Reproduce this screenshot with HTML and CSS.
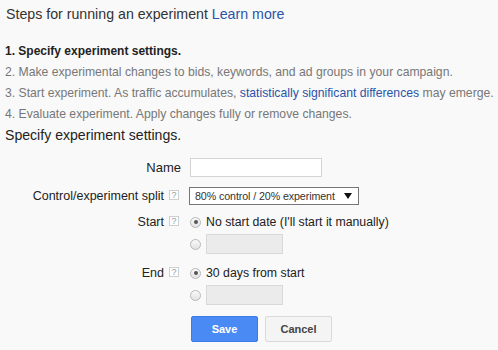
FILE: index.html
```html
<!DOCTYPE html>
<html>
<head>
<meta charset="utf-8">
<link rel="stylesheet" href="styles.css">
</head>
<body>
<div class="page">
  <div class="title">Steps for running an experiment <a class="link" href="#">Learn more</a></div>
  <ol class="steps">
    <li class="step current">1. Specify experiment settings.</li>
    <li class="step">2. Make experimental changes to bids, keywords, and ad groups in your campaign.</li>
    <li class="step">3. Start experiment. As traffic accumulates, <a class="link" href="#">statistically significant differences</a> may emerge.</li>
    <li class="step">4. Evaluate experiment. Apply changes fully or remove changes.</li>
  </ol>
  <div class="heading">Specify experiment settings.</div>

  <div class="form">
    <div class="row row-name">
      <div class="label">Name</div>
      <div class="control"><input class="text-input" type="text"></div>
    </div>
    <div class="row row-split">
      <div class="label">Control/experiment split<span class="help">?</span></div>
      <div class="control">
        <div class="select">
          <span class="select-text">80% control / 20% experiment</span>
          <span class="select-arrow"></span>
        </div>
      </div>
    </div>
    <div class="row row-start">
      <div class="label">Start<span class="help">?</span></div>
      <div class="control">
        <div class="option"><span class="radio checked"></span><span class="option-text">No start date (I'll start it manually)</span></div>
        <div class="option option-date"><span class="radio"></span><span class="date-input"></span></div>
      </div>
    </div>
    <div class="row row-end">
      <div class="label">End<span class="help">?</span></div>
      <div class="control">
        <div class="option"><span class="radio checked"></span><span class="option-text">30 days from start</span></div>
        <div class="option option-date"><span class="radio"></span><span class="date-input"></span></div>
      </div>
    </div>
    <div class="row row-buttons">
      <div class="label"></div>
      <div class="control buttons">
        <button class="btn btn-save">Save</button>
        <button class="btn btn-cancel">Cancel</button>
      </div>
    </div>
  </div>
</div>
</body>
</html>
```

FILE: styles.css
```css
html, body {
  margin: 0;
  padding: 0;
  background: #f9f9f9;
}
body {
  font-family: "Liberation Sans", Arial, sans-serif;
  color: #222;
}
.page {
  padding: 4px 5px 0 5px;
}
.title {
  font-size: 14.2px;
  line-height: 20px;
  color: #333;
  padding-left: 1px;
}
.link {
  color: #2a54a8;
  text-decoration: none;
}
.steps {
  list-style: none;
  margin: 17px 0 0 0;
  padding: 0;
}
.step {
  font-size: 12.2px;
  line-height: 21px;
  color: #777;
  white-space: nowrap;
}
.step.current {
  font-size: 12px;
  color: #222;
  font-weight: bold;
}
.heading {
  font-size: 14.1px;
  line-height: 21px;
  color: #222;
}
.form {
  display: flex;
  flex-direction: column;
  margin-top: 12px;
}
.row {
  display: flex;
  align-items: flex-start;
}
.label {
  width: 176px;
  flex: none;
  display: flex;
  justify-content: flex-end;
  align-items: flex-start;
  font-size: 12.5px;
  color: #222;
}
.row-name .label { font-size: 13px; }
.control {
  margin-left: 9px;
  display: flex;
  flex-direction: column;
}
.row-name .label { line-height: 19px; }
.row-split { margin-top: 10px; }
.row-split .label { line-height: 18px; }
.row-start { margin-top: 8px; }
.row-start .label, .row-end .label { line-height: 18px; }
.row-end { margin-top: 10px; }
.row-buttons { margin-top: 11px; }

.help {
  width: 8px;
  height: 8px;
  border: 1px solid #cfcfcf;
  background: #fff;
  color: #999;
  font-size: 9px;
  line-height: 8px;
  text-align: center;
  margin: 3px 2px 0 5px;
  font-family: "Liberation Sans", Arial, sans-serif;
}
.text-input {
  box-sizing: border-box;
  width: 132px;
  height: 19px;
  margin: 0;
  padding: 0 3px;
  border: 1px solid #d4d4d4;
  background: #fff;
  outline: none;
}
.select {
  box-sizing: border-box;
  position: relative;
  width: 170px;
  height: 18px;
  margin-left: -1px;
  border: 1px solid #767676;
  background: #fff;
  display: flex;
  align-items: center;
}
.select-text {
  font-size: 10.7px;
  padding-left: 5px;
  color: #333;
  letter-spacing: -0.1px;
}
.select-arrow {
  position: absolute;
  right: 6px;
  top: 5px;
  width: 0;
  height: 0;
  border-left: 4px solid transparent;
  border-right: 4px solid transparent;
  border-top: 6px solid #111;
}
.option {
  display: flex;
  align-items: center;
  height: 18px;
}
.option-date {
  margin-top: 3px;
  height: 20px;
}
.radio {
  box-sizing: border-box;
  width: 11px;
  height: 11px;
  border-radius: 50%;
  border: 1px solid #b8b8b8;
  background: linear-gradient(#fafafa, #e2e2e2);
  margin-left: 0;
  margin-right: 5px;
  position: relative;
  flex: none;
}
.radio.checked::after {
  content: "";
  position: absolute;
  left: 2.5px;
  top: 2.5px;
  width: 4px;
  height: 4px;
  border-radius: 50%;
  background: #555;
}
.option-text {
  font-size: 12.3px;
  color: #222;
}
.date-input {
  box-sizing: border-box;
  width: 77px;
  height: 20px;
  border: 1px solid #d9d9d9;
  background: #ebebeb;
}
.buttons {
  flex-direction: row;
  gap: 7px;
  margin-left: 10px;
}
.btn {
  box-sizing: border-box;
  width: 67px;
  height: 26px;
  border-radius: 2px;
  font-family: "Liberation Sans", Arial, sans-serif;
  font-size: 11px;
  font-weight: bold;
  padding: 0;
}
.btn-save {
  background: #4a8af4;
  border: 1px solid #3b7ae8;
  color: #fff;
}
.btn-cancel {
  background: #f4f4f4;
  border: 1px solid #dadada;
  color: #444;
}
```
